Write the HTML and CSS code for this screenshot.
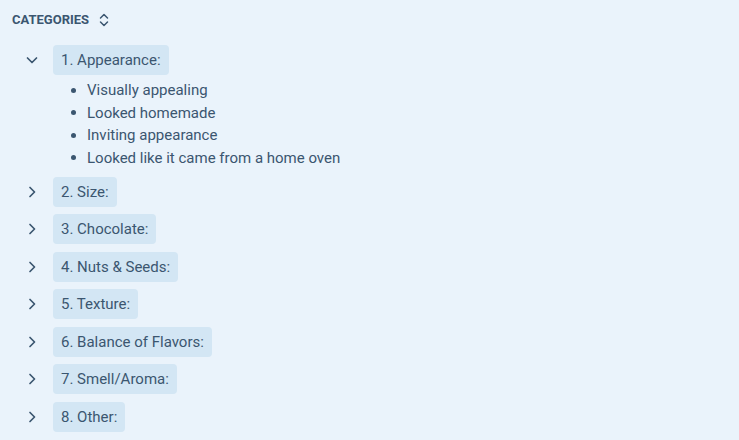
FILE: index.html
```html
<!DOCTYPE html>
<html>
<head>
<meta charset="utf-8">
<link rel="stylesheet" href="styles.css">
</head>
<body>
<div class="panel">
  <div class="header">
    <span class="title">CATEGORIES</span>
    <svg class="sort" width="12" height="16" viewBox="0 0 12 16"><path d="M2.5 6 L6 2.5 L9.5 6 M2.5 10 L6 13.5 L9.5 10" fill="none" stroke="#3b5670" stroke-width="1.5" stroke-linecap="round" stroke-linejoin="round"/></svg>
  </div>
  <div class="tree">
    <div class="item open">
      <div class="row">
        <span class="toggle"><svg width="12" height="12" viewBox="0 0 12 12"><path d="M1.5 4 L6 8.5 L10.5 4" fill="none" stroke="#3b5670" stroke-width="1.7" stroke-linecap="round" stroke-linejoin="round"/></svg></span>
        <span class="pill">1. Appearance:</span>
      </div>
      <ul class="notes">
        <li>Visually appealing</li>
        <li>Looked homemade</li>
        <li>Inviting appearance</li>
        <li>Looked like it came from a home oven</li>
      </ul>
    </div>
    <div class="item"><div class="row"><span class="toggle"><svg width="12" height="12" viewBox="0 0 12 12"><path d="M4 1.5 L8.5 6 L4 10.5" fill="none" stroke="#3b5670" stroke-width="1.7" stroke-linecap="round" stroke-linejoin="round"/></svg></span><span class="pill">2. Size:</span></div></div>
    <div class="item"><div class="row"><span class="toggle"><svg width="12" height="12" viewBox="0 0 12 12"><path d="M4 1.5 L8.5 6 L4 10.5" fill="none" stroke="#3b5670" stroke-width="1.7" stroke-linecap="round" stroke-linejoin="round"/></svg></span><span class="pill">3. Chocolate:</span></div></div>
    <div class="item"><div class="row"><span class="toggle"><svg width="12" height="12" viewBox="0 0 12 12"><path d="M4 1.5 L8.5 6 L4 10.5" fill="none" stroke="#3b5670" stroke-width="1.7" stroke-linecap="round" stroke-linejoin="round"/></svg></span><span class="pill">4. Nuts &amp; Seeds:</span></div></div>
    <div class="item"><div class="row"><span class="toggle"><svg width="12" height="12" viewBox="0 0 12 12"><path d="M4 1.5 L8.5 6 L4 10.5" fill="none" stroke="#3b5670" stroke-width="1.7" stroke-linecap="round" stroke-linejoin="round"/></svg></span><span class="pill">5. Texture:</span></div></div>
    <div class="item"><div class="row"><span class="toggle"><svg width="12" height="12" viewBox="0 0 12 12"><path d="M4 1.5 L8.5 6 L4 10.5" fill="none" stroke="#3b5670" stroke-width="1.7" stroke-linecap="round" stroke-linejoin="round"/></svg></span><span class="pill">6. Balance of Flavors:</span></div></div>
    <div class="item"><div class="row"><span class="toggle"><svg width="12" height="12" viewBox="0 0 12 12"><path d="M4 1.5 L8.5 6 L4 10.5" fill="none" stroke="#3b5670" stroke-width="1.7" stroke-linecap="round" stroke-linejoin="round"/></svg></span><span class="pill">7. Smell/Aroma:</span></div></div>
    <div class="item"><div class="row"><span class="toggle"><svg width="12" height="12" viewBox="0 0 12 12"><path d="M4 1.5 L8.5 6 L4 10.5" fill="none" stroke="#3b5670" stroke-width="1.7" stroke-linecap="round" stroke-linejoin="round"/></svg></span><span class="pill">8. Other:</span></div></div>
  </div>
</div>
</body>
</html>
```
FILE: styles.css
```css
html, body {
  margin: 0;
  background: #eaf3fb;
}
body {
  font-family: Roboto, "Liberation Sans", sans-serif;
  color: #3b5670;
  height: 440px;
  overflow: hidden;
}
.panel {
  padding: 8px 12px 0 12px;
}
.header {
  display: flex;
  align-items: center;
  height: 24px;
  gap: 9px;
}
.title {
  font-size: 13px;
  font-weight: 700;
  line-height: 24px;
}
.sort {
  display: block;
}
.tree {
  margin-top: 13px;
}
.item {
  margin-bottom: 7.5px;
}
.row {
  display: flex;
  align-items: center;
  height: 30px;
}
.toggle {
  width: 41px;
  padding-left: 14px;
  box-sizing: border-box;
  display: flex;
  align-items: center;
}
.toggle svg {
  display: block;
}
.pill {
  background: #d3e6f4;
  border-radius: 4px;
  padding: 0 8px;
  height: 30px;
  line-height: 30px;
  font-size: 15px;
}
.notes {
  list-style: none;
  margin: 4px 0 0 0;
  padding: 0 0 0 59px;
}
.notes li {
  display: flex;
  align-items: center;
  height: 22.5px;
  font-size: 15px;
}
.notes li::before {
  content: "";
  width: 5px;
  height: 5px;
  border-radius: 50%;
  background: #3b5670;
  margin-right: 11px;
  flex: none;
}
```
